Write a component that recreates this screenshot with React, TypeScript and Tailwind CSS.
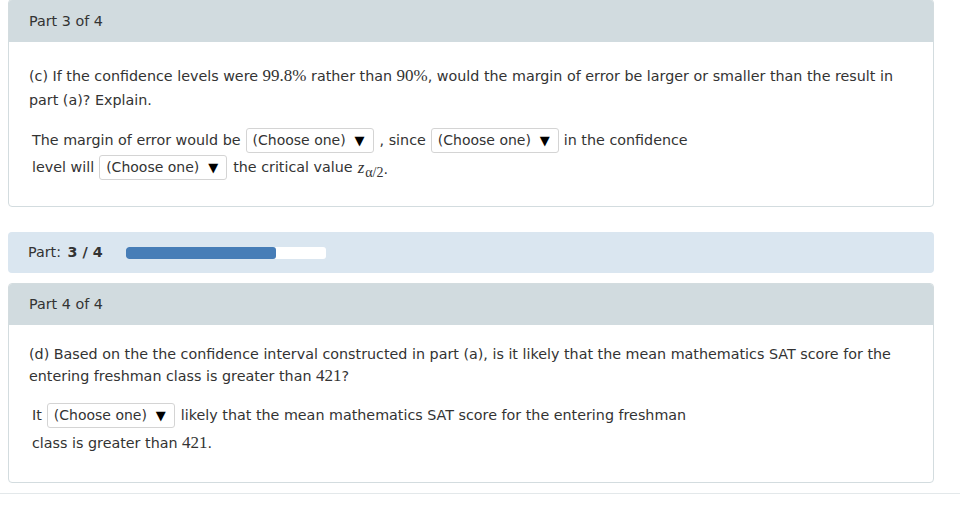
import React from "react";

function Select() {
  return (
    <span className="inline-flex items-center h-[25px] w-[128px] border border-[#d4d4d4] rounded-[3px] bg-white pl-[6px] pr-[8px] mx-[5px] justify-between text-[14px] text-[#333]">
      <span>(Choose one)</span>
      <span className="text-[13px] text-black">▼</span>
    </span>
  );
}

function M({ children }: { children: React.ReactNode }) {
  return <span className="font-['Liberation_Serif',serif] text-[17px]">{children}</span>;
}

function Card({ title, first, children }: { title: string; first?: boolean; children: React.ReactNode }) {
  return (
    <div className="rounded-[4px] border border-[#d3dcdf] overflow-hidden bg-white">
      <div className={`${first ? "h-[42px] pt-[2px]" : "h-[41px] pt-[1px]"} bg-[#d1dbdf] flex items-center pl-[20px] text-[#333]`}>{title}</div>
      {children}
    </div>
  );
}

export default function App() {
  return (
    <div className="w-[960px] h-[529px] bg-white font-['DejaVu_Sans',sans-serif] text-[14.3px] text-[#333] overflow-hidden">
      <div className="px-2 -mt-px">
        <div className="w-[926px]">
          <Card title="Part 3 of 4" first>
            <div className="pl-[20px] pt-[22px] pb-[25px]">
              <p className="leading-[24px]">
                (c) If the confidence levels were <M>99.8%</M> rather than <M>90%</M>, would the margin of error be larger or smaller than the result in
                <br />
                part (a)? Explain.
              </p>
              <div className="pl-[3px] mt-[15px]">
                <div className="flex items-center h-[27px]">
                  <span>The margin of error would be</span>
                  <Select />
                  <span className="ml-[1px]">, since</span>
                  <Select />
                  <span>in the confidence</span>
                </div>
                <div className="flex items-center h-[27px]">
                  <span>level will</span>
                  <Select />
                  <span className="ml-[1px]">the critical value</span>
                  <span className="ml-[5px] font-['Liberation_Serif',serif] italic text-[17px]">z</span>
                  <span className="ml-[1px] font-['Liberation_Serif',serif] text-[14px] mt-[10px]">α/2</span>
                  <span className="mt-[4px]">.</span>
                </div>
              </div>
            </div>
          </Card>

          <div className="mt-[25px] h-[41px] rounded-[4px] bg-[#dae6f0] flex items-center pl-[20px]">
            <span>
              Part: <span className="font-bold ml-[2px] whitespace-pre">3 / 4</span>
            </span>
            <div className="ml-[23px] w-[200px] h-[12px] bg-white rounded-[3px] overflow-hidden">
              <div className="h-full bg-[#467db7] rounded-[3px]" style={{ width: `${(3 / 4) * 100}%` }} />
            </div>
          </div>

          <div className="mt-[10px]">
            <Card title="Part 4 of 4">
              <div className="pl-[20px] pt-[18px] pb-[26px]">
                <p className="leading-[22px]">
                  (d) Based on the the confidence interval constructed in part (a), is it likely that the mean mathematics SAT score for the
                  <br />
                  entering freshman class is greater than <M>421</M>?
                </p>
                <div className="pl-[3px] mt-[15px]">
                  <div className="flex items-center h-[27px]">
                    <span>It</span>
                    <Select />
                    <span className="ml-[1px]">likely that the mean mathematics SAT score for the entering freshman</span>
                  </div>
                  <div className="flex items-center h-[27px]">
                    <span>
                      class is greater than <M>421</M>.
                    </span>
                  </div>
                </div>
              </div>
            </Card>
          </div>
        </div>
      </div>
      <div className="mt-[10px] h-px bg-[#e3e8ea]" />
    </div>
  );
}
